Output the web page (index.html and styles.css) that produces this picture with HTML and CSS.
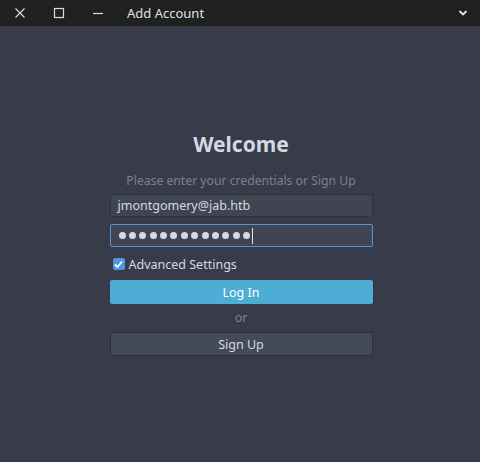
FILE: index.html
```html
<!DOCTYPE html>
<html>
<head>
<meta charset="utf-8">
<link rel="stylesheet" href="styles.css">
</head>
<body>
<div class="titlebar">
  <span class="tb-btn"><svg width="12" height="12" viewBox="0 0 12 12"><path d="M1.5 1.5 L10.5 10.5 M10.5 1.5 L1.5 10.5" stroke="#dcdcdc" stroke-width="1.2" fill="none"/></svg></span>
  <span class="tb-btn"><svg width="12" height="12" viewBox="0 0 12 12"><rect x="1.5" y="1.5" width="9" height="9" stroke="#dcdcdc" stroke-width="1.2" fill="none"/></svg></span>
  <span class="tb-btn"><svg width="12" height="12" viewBox="0 0 12 12"><path d="M1 6.5 H11" stroke="#dcdcdc" stroke-width="1.2" fill="none"/></svg></span>
  <span class="tb-title">Add Account</span>
  <span class="tb-menu"><svg width="10" height="8" viewBox="0 0 10 8"><path d="M1.5 2 L5 5.5 L8.5 2" stroke="#e6e6e6" stroke-width="1.8" fill="none"/></svg></span>
</div>
<main class="content">
  <div class="form">
    <h1 class="welcome">Welcome</h1>
    <p class="subtitle">Please enter your credentials or Sign Up</p>
    <div class="field">jmontgomery@jab.htb</div>
    <div class="field focused">
      <span class="dots" aria-label="password"><i></i><i></i><i></i><i></i><i></i><i></i><i></i><i></i><i></i><i></i><i></i><i></i><i></i></span><span class="caret"></span>
    </div>
    <label class="check"><span class="box"><svg width="11" height="11" viewBox="0 0 11 11"><path d="M2 5.5 L4.5 8 L9 2.5" stroke="#ffffff" stroke-width="1.8" fill="none"/></svg></span>Advanced Settings</label>
    <div class="btn primary">Log In</div>
    <div class="or">or</div>
    <div class="btn">Sign Up</div>
  </div>
</main>
</body>
</html>
```
FILE: styles.css
```css
html, body {
  margin: 0;
  padding: 0;
}
body {
  width: 480px;
  height: 462px;
  background: #383c4a;
  font-family: "Noto Sans", "Open Sans", sans-serif;
  color: #d3dae3;
  overflow: hidden;
}
.titlebar {
  height: 26px;
  background: #202020;
  display: flex;
  align-items: center;
  padding-left: 14px;
  box-sizing: border-box;
}
.tb-btn {
  width: 12px;
  height: 12px;
  display: flex;
  margin-right: 27px;
}
.tb-btn:nth-child(3) { margin-right: 23px; }
.tb-title {
  font-size: 13px;
  color: #dce3ec;
  flex: 1;
}
.tb-menu {
  display: flex;
  margin-right: 12px;
}
.content {
  display: flex;
  justify-content: center;
}
.form {
  width: 263px;
  margin-left: 2px;
  display: flex;
  flex-direction: column;
  padding-top: 103px;
}
.welcome {
  margin: 0;
  font-size: 21px;
  font-weight: bold;
  text-align: center;
  color: #d3dae3;
  line-height: 30px;
}
.subtitle {
  margin: 13px 0 4px 0;
  font-size: 12.2px;
  text-align: center;
  color: #7c818c;
  line-height: 18px;
}
.field {
  height: 23px;
  box-sizing: border-box;
  background: #404552;
  border: 1px solid #2f323e;
  border-radius: 2px;
  font-size: 12.5px;
  padding: 0 7px;
  display: flex;
  align-items: center;
  color: #d3dae3;
  margin-bottom: 7px;
}
.field.focused {
  border-color: #5294e2;
  margin-bottom: 8px;
  padding-left: 8px;
}
.dots {
  display: flex;
  gap: 3.4px;
}
.dots i {
  width: 7px;
  height: 7px;
  border-radius: 50%;
  background: #d3dae3;
}
.caret {
  width: 1px;
  height: 16px;
  background: #e6e6e6;
  margin-left: 2px;
}
.check {
  display: flex;
  align-items: center;
  font-size: 12.5px;
  color: #d3dae3;
  height: 18px;
  margin-left: 3px;
  margin-bottom: 7px;
}
.box {
  width: 12px;
  height: 12px;
  background: #5294e2;
  border-radius: 2px;
  display: flex;
  align-items: center;
  justify-content: center;
  margin-right: 4px;
}
.btn {
  height: 24px;
  box-sizing: border-box;
  border-radius: 2px;
  border: 1px solid #2b2e39;
  background: #444a58;
  color: #d3dae3;
  font-size: 12.5px;
  display: flex;
  align-items: center;
  justify-content: center;
}
.btn.primary {
  background: #4dadd4;
  border-color: #4dadd4;
  color: #ffffff;
}
.or {
  text-align: center;
  font-size: 12.5px;
  color: #7c818c;
  height: 28px;
  line-height: 28px;
}
```
